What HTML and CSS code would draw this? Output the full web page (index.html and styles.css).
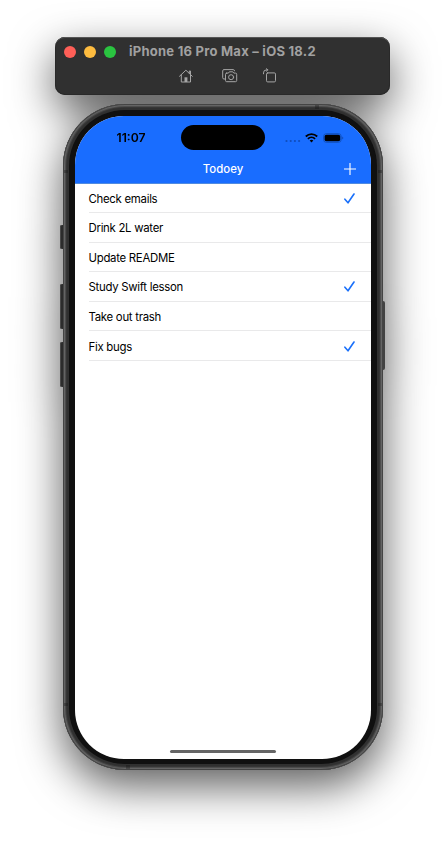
FILE: index.html
```html
<!DOCTYPE html>
<html lang="en">
<head>
<meta charset="utf-8">
<title>Todoey</title>
<link rel="stylesheet" href="styles.css">
</head>
<body>
<main class="simulator">
  <header class="toolbar">
    <div class="title-row">
      <i class="light red"></i><i class="light yellow"></i><i class="light green"></i>
      <span class="window-title">iPhone 16 Pro Max – iOS 18.2</span>
    </div>
    <div class="tools">
      <svg class="tool" width="16" height="16" viewBox="0 0 16 16"><path d="M1.500 8.300 7.900 2.200l6.400 6.100M3.300 6.900v7.100h9.200V6.900M11.300 5.200V3h1.200v3.300"/><path class="solid" d="M6.500 14V9.300h2.900V14z"/></svg>
      <svg class="tool" width="16" height="16" viewBox="0 0 16 16"><path d="M3.200 11H2A1.300 1.300 0 0 1 .7 9.700V2.900A1.300 1.300 0 0 1 2 1.600h9.300a1.200 1.200 0 0 1 1.200 1.200"/><path d="M4.700 5.100h1.700l1-1.300h3.400l1 1.300h1.700a1.200 1.200 0 0 1 1.200 1.200v6.200a1.200 1.200 0 0 1-1.200 1.200H4.700a1.200 1.200 0 0 1-1.200-1.200V6.300a1.200 1.200 0 0 1 1.200-1.200z"/><circle cx="9.100" cy="9.200" r="2.500"/></svg>
      <svg class="tool" width="16" height="16" viewBox="0 0 16 16"><rect x="4.500" y="4.900" width="9" height="9" rx="1.200"/><path d="M1.500 5.800V4.900a3 3 0 0 1 3-3h1.300M4.300.700 5.800 1.900 4.300 3.200"/></svg>
    </div>
  </header>
  <section class="phone">
    <i class="key action"></i><i class="key volume-up"></i><i class="key volume-down"></i><i class="key power"></i>
    <div class="frame"><div class="bezel"><div class="screen">
      <div class="app-header">
        <div class="status">
          <span class="time">11:07</span>
          <span class="island"></span>
          <span class="indicators">
            <svg width="16" height="4" viewBox="0 0 16 4"><g class="dim"><circle cx="1.500" cy="2" r="1.100"/><circle cx="5.700" cy="2" r="1.100"/><circle cx="9.900" cy="2" r="1.100"/><circle cx="14.100" cy="2" r="1.100"/></g></svg>
            <svg class="wifi" width="13" height="10" viewBox="0 0 13 10"><path d="M.8 3.500a8.200 8.200 0 0 1 11.400 0M2.900 5.900a5.200 5.200 0 0 1 7.200 0"/><path class="dot" d="M4.700 7.500a2.600 2.600 0 0 1 3.600 0L6.500 9.400z"/></svg>
            <svg class="battery" width="21" height="10" viewBox="0 0 21 10"><rect class="case" x=".6" y=".7" width="17.600" height="8.600" rx="2.700"/><rect x="1.600" y="1.700" width="15.600" height="6.600" rx="1.700"/><path class="dim" d="M19.200 3.500c1.500.6 1.500 2.400 0 3z"/></svg>
          </span>
        </div>
        <div class="nav">
          <h1>Todoey</h1>
          <svg class="add" width="12" height="12" viewBox="0 0 12 12"><path d="M6 .3v11.400M.3 6h11.400"/></svg>
        </div>
      </div>
      <ul class="todos">
        <li><span>Check emails</span><svg class="check" width="11" height="11" viewBox="0 0 11 11"><path d="M.9 6.200 4 9.800 10 1"/></svg></li>
        <li><span>Drink 2L water</span></li>
        <li><span>Update README</span></li>
        <li><span>Study Swift lesson</span><svg class="check" width="11" height="11" viewBox="0 0 11 11"><path d="M.9 6.200 4 9.800 10 1"/></svg></li>
        <li><span>Take out trash</span></li>
        <li><span>Fix bugs</span><svg class="check" width="11" height="11" viewBox="0 0 11 11"><path d="M.9 6.200 4 9.800 10 1"/></svg></li>
      </ul>
      <div class="home-indicator"></div>
    </div></div></div>
    <i class="band top"></i><i class="band bottom"></i><i class="band left upper"></i><i class="band left lower"></i><i class="band right upper"></i><i class="band right lower"></i>
  </section>
</main>
</body>
</html>
```
FILE: styles.css
```css
* { box-sizing: border-box; }
body { margin: 0; background: #fff; font-family: Inter, "Liberation Sans", sans-serif; overflow: hidden; }
.simulator {
  width: 445px; height: 845px; padding-top: 37px;
  display: flex; flex-direction: column; align-items: center; gap: 9px;
  filter: drop-shadow(0 16px 22px rgba(0, 0, 0, .64));
}
svg { display: block; flex: none; }
.toolbar {
  width: 335px; height: 58px; border-radius: 10px; background: #303030;
  box-shadow: inset 0 1px 0 #555, inset 0 0 0 1px #292929;
}
.title-row { height: 29px; padding-left: 9px; display: flex; align-items: center; gap: 8px; }
.light { width: 12px; height: 12px; border-radius: 50%; }
.red { background: #ff5f57; }
.yellow { background: #febc3f; }
.green { background: #2ac440; }
.window-title { margin: -1px 0 0 5px; font-size: 13px; line-height: 16px; font-weight: 700; letter-spacing: .25px; color: #a1a1a1; white-space: nowrap; }
.tools { display: flex; gap: 27px; padding: 2px 0 0 123px; }
.tool { fill: none; stroke: #a5a5a5; stroke-width: 1; stroke-linejoin: round; stroke-linecap: round; }
.tool:nth-child(2) { margin-left: 1px; }
.tool:nth-child(3) { margin-left: -3px; }
.tool .solid { fill: #a5a5a5; stroke: none; }
.phone { position: relative; width: 320px; height: 666px; left: .5px; }
.frame {
  position: relative; height: 100%; padding: 6px; border-radius: 62px; background: #303030;
  box-shadow: inset 0 0 0 1px #444, inset 0 0 0 2px #646464, inset 0 0 0 3px #4c4c4c, inset 0 0 0 4px #363636;
}
.bezel { height: 100%; padding: 6px 6px 5px 6px; border-radius: 56px; background: #101010; }
.screen {
  position: relative; width: 296px; height: 643px; border-radius: 49px; overflow: hidden;
  background: #fff; display: flex; flex-direction: column;
}
.key { position: absolute; left: -3px; width: 5px; border-radius: 2px; background: #2c2c2c; box-shadow: inset 1px 0 #484848; }
.action { top: 121px; height: 24px; }
.volume-up { top: 180px; height: 45px; }
.volume-down { top: 238px; height: 45px; }
.power { left: auto; right: -2px; top: 197px; height: 69px; background: #424242; }
.band { position: absolute; background: rgba(20, 20, 20, .35); }
.top, .bottom { width: 4px; height: 4px; }
.top { top: 1px; right: 64px; }
.bottom { bottom: 1px; left: 63px; }
.left, .right { width: 4px; height: 3px; }
.left { left: 1px; }
.right { right: 1px; }
.upper { top: 66px; }
.lower { top: 599px; }
.app-header { height: 67.500px; background: #196dff; border-bottom: 1px solid #508be0; flex: none; }
.status { position: relative; height: 43px; display: grid; grid-template-columns: 106px 84px 106px; align-items: center; }
.time { padding-left: 6px; text-align: center; font-size: 12.200px; font-weight: 600; line-height: 16px; color: #000; }
.island { height: 25px; border-radius: 13px; background: #000; }
.indicators { display: flex; align-items: center; padding-left: 20px; }
.indicators svg:first-child { margin-top: 6px; }
.dim { fill: #104dbb; }
.wifi { margin-left: 4px; fill: none; stroke: #000; stroke-width: 1.800; }
.wifi .dot { fill: #000; stroke: none; }
.battery { margin-left: 5px; }
.battery .case { fill: none; stroke: #1050bd; stroke-width: 1; }
.nav { height: 20px; display: grid; grid-template-columns: 1fr auto 1fr; align-items: center; padding-right: 15px; padding-left: 15px; color: #fff; }
.nav h1 { margin: 0; grid-column: 2; font-size: 11.400px; line-height: 15px; font-weight: 500; }
.add { justify-self: end; fill: none; stroke: #fff; stroke-width: 1.150; stroke-linecap: round; }
.todos { list-style: none; margin: 0; padding: 0 0 0 13.500px; }
.todos li {
  height: 29.570px; padding: 1px 16px 0 0; display: flex; align-items: center; justify-content: space-between;
  border-bottom: 1px solid #e9e9ea; font-size: 11.400px; line-height: 16px; letter-spacing: -.28px; color: #000;
}
.todos span { position: relative; top: .500px; }
.check { fill: none; stroke: #1a70fa; stroke-width: 1.600; stroke-linecap: round; stroke-linejoin: round; }
.home-indicator { width: 106px; height: 3px; margin: auto auto 6px; border-radius: 2px; background: #666; }
```
